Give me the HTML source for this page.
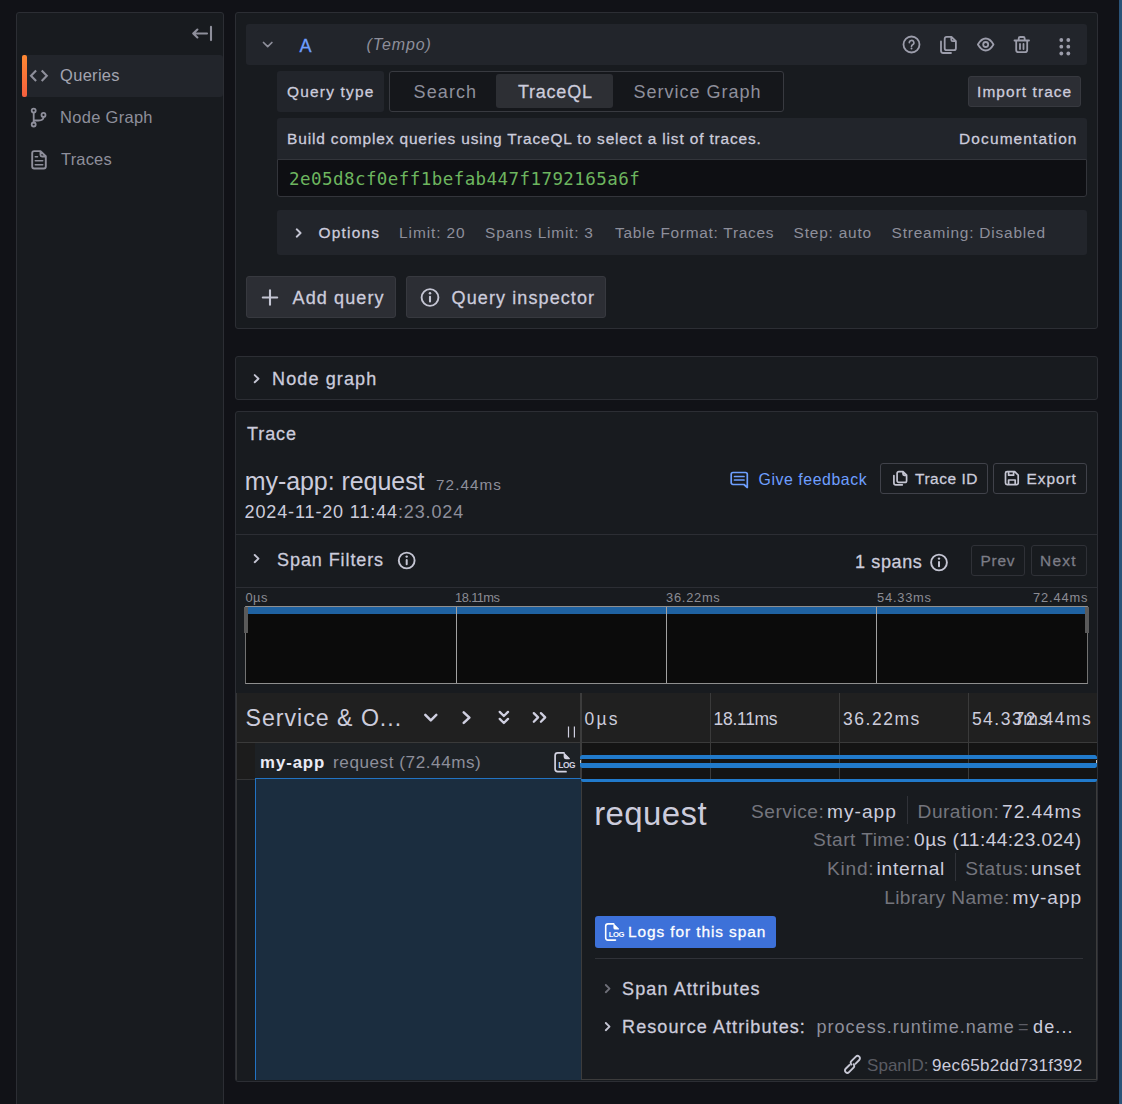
<!DOCTYPE html>
<html lang="en">
<head>
<meta charset="utf-8">
<title>Explore - Tempo - Grafana</title>
<style>
*{box-sizing:border-box;margin:0;padding:0}
html,body{width:1122px;height:1104px;overflow:hidden;background:#111217;}
body{font-family:"Liberation Sans",sans-serif;color:#ccccdc;font-size:17.5px;position:relative;}
.a{position:absolute}
.t{position:absolute;white-space:nowrap;line-height:1;}
.panel{position:absolute;background:#181b1f;border:1px solid #2c2e34;border-radius:3px;}
.box{position:absolute;background:#22252b;border-radius:3px;}
.btn{position:absolute;background:#2c2e34;border:1px solid #37393f;border-radius:3px;}
.obtn{position:absolute;border:1px solid #40424a;border-radius:3px;}
svg{position:absolute;overflow:visible}
.i{fill:none;stroke:#c4c5d3;stroke-width:1.9;stroke-linecap:round;stroke-linejoin:round}
.is{fill:none;stroke:#8e8f9b;stroke-width:1.7;stroke-linecap:round;stroke-linejoin:round}
.vl{position:absolute;width:1px;background:#3a3a3a}

</style>
</head>
<body>
<!-- right blue edge -->
<div class="a" style="left:1119px;top:0;width:3px;height:1104px;background:#2a5378"></div>

<!-- SIDEBAR -->
<div class="panel" style="left:16px;top:12px;width:208px;height:1110px;"></div>
<div class="a" style="left:22px;top:55px;width:201px;height:42px;background:#22252b;border-radius:3px"></div>
<div class="a" style="left:22px;top:55px;width:5px;height:42px;border-radius:2px;background:linear-gradient(180deg,#ff8833,#f55f3e)"></div>
<svg class="is" style="left:0;top:0" width="240" height="200" viewBox="0 0 240 200">
  <!-- collapse -->
  <path d="M207 33.500H193.200M197.400 29.500l-4.200 4 4.200 4M211 26.900v13.200" stroke-width="2.100"/>
  <!-- brackets -->
  <path d="M36.100 70.500l-5.100 5.300 5.100 5.300M41.700 70.500l5.100 5.300-5.100 5.300" stroke-width="2.100" stroke-linecap="butt" stroke-linejoin="miter"/>
  <!-- code branch -->
  <g stroke-width="1.800"><circle cx="33.700" cy="110.600" r="2"/><circle cx="33.700" cy="124.500" r="2"/><circle cx="43.500" cy="114.900" r="2"/>
  <path d="M33.700 112.700v9.700M43.500 117c0 2.700-2 3.500-5 3.500h-4.700"/></g>
  <!-- file -->
  <g stroke-width="1.900"><path d="M40.500 151.100h-6.300a2 2 0 0 0-2 2v13.400a2 2 0 0 0 2 2h9.600a2 2 0 0 0 2-2v-10.200z M40.500 151.300v3.700a1.500 1.500 0 0 0 1.500 1.500h3.600"/><path d="M35.300 160.800h7.400M35.300 164.700h7.400M35.300 156.800h2.200" stroke-width="1.600"/></g>
</svg>

<!-- QUERIES PANEL -->
<div class="panel" style="left:235px;top:12px;width:863px;height:317px;"></div>
<div class="box" style="left:246px;top:24px;width:841px;height:41px;"></div>
<svg class="i" style="left:0;top:0" width="1122" height="70" viewBox="0 0 1122 70">
  <path class="is" d="M263.500 42.500l4.200 4.200 4.200-4.200" stroke-width="1.900"/>
  <g stroke="#9c9dab" stroke-width="1.800">
  <!-- help -->
  <circle cx="911.500" cy="44.500" r="8"/>
  <path d="M909.300 42.700a2.300 2.300 0 1 1 3.300 2.100c-.800.400-1.100.900-1.100 1.600" stroke-width="1.600"/><circle cx="911.500" cy="48.600" r="1" fill="#9c9dab" stroke="none"/>
  <!-- copy -->
  <path d="M946.700 36.800h4.800l4.400 4.400v7a2 2 0 0 1-2 2h-7.200a2 2 0 0 1-2-2v-9.400a2 2 0 0 1 2-2zM951.300 37v2.700a1.500 1.500 0 0 0 1.500 1.500h2.900M941 41.500v9.300a2.200 2.200 0 0 0 2.200 2.200h7.800"/>
  <!-- eye -->
  <path d="M977.900 44.500c2.300-4 4.900-6 7.800-6s5.500 2 7.800 6c-2.300 4-4.900 6-7.800 6s-5.500-2-7.800-6z"/><circle cx="985.700" cy="44.500" r="2.500"/>
  <!-- trash -->
  <path d="M1014.500 40.500h14.500M1016.200 40.500v9.500a2.200 2.200 0 0 0 2.200 2.200h6.600a2.200 2.200 0 0 0 2.200-2.200v-9.500M1018.700 40.300v-1.800a1.500 1.500 0 0 1 1.500-1.500h3a1.500 1.500 0 0 1 1.500 1.500v1.800M1020 44v5M1023.500 44v5"/>
  </g>
  <!-- drag -->
  <g fill="#9c9dab" stroke="none"><circle cx="1061.300" cy="40" r="1.900"/><circle cx="1068.300" cy="40" r="1.900"/><circle cx="1061.300" cy="46.700" r="1.900"/><circle cx="1068.300" cy="46.700" r="1.900"/><circle cx="1061.300" cy="53.500" r="1.900"/><circle cx="1068.300" cy="53.500" r="1.900"/></g>
</svg>

<!-- row 2 -->
<div class="box" style="left:277px;top:71px;width:107px;height:41px;"></div>
<div class="a" style="left:389px;top:71px;width:395px;height:41px;border:1px solid #383a40;border-radius:3px;background:#15171b"></div>
<div class="a" style="left:496px;top:74px;width:117px;height:34px;border-radius:3px;background:#2d2f34"></div>
<div class="btn" style="left:968px;top:76px;width:113px;height:31px;"></div>
<!-- row 3 -->
<div class="box" style="left:277px;top:118px;width:810px;height:41px;border-radius:3px 3px 0 0"></div>
<div class="a" style="left:277px;top:159px;width:810px;height:38px;background:#0e0f13;border:1px solid #33353b;border-radius:0 0 3px 3px"></div>
<!-- options -->
<div class="box" style="left:277px;top:210px;width:810px;height:45px;"></div>
<svg class="i" style="left:0;top:200px" width="700" height="130" viewBox="0 200 700 130">
  <path d="M296.700 229.300l3.900 3.700-3.900 3.700"/>
</svg>
<div class="btn" style="left:246px;top:276px;width:150px;height:42px;"></div>
<div class="btn" style="left:406px;top:276px;width:200px;height:42px;"></div>
<svg class="i" style="left:0;top:200px" width="700" height="130" viewBox="0 200 700 130">
  <path d="M262.800 297.500h14.400M270 290.300v14.400" stroke-width="2.100"/>
  <circle cx="430" cy="297.500" r="8.400"/><path d="M430 296.800v4.700" stroke-width="2.100"/><circle cx="430" cy="293.300" r="1.250" fill="#c4c5d3" stroke="none"/>
</svg>

<!-- NODE GRAPH PANEL -->
<div class="panel" style="left:235px;top:356px;width:863px;height:44px;"></div>
<svg class="i" style="left:0;top:350px" width="300" height="60" viewBox="0 350 300 60"><path d="M254.700 375.100l3.800 3.600-3.800 3.600"/></svg>

<!-- TRACE PANEL -->
<div class="panel" style="left:235px;top:411px;width:863px;height:671px;"></div>
<!-- header buttons -->
<svg style="left:0;top:460px" width="1122" height="40" viewBox="0 460 1122 40" fill="none" stroke-linecap="round" stroke-linejoin="round">
  <path stroke="#6e9fff" stroke-width="1.700" d="M733 472.500h12.500a1.800 1.800 0 0 1 1.800 1.800v13.200l-3.300-3h-11a1.800 1.800 0 0 1-1.800-1.800v-8.400a1.800 1.800 0 0 1 1.800-1.800zM734.500 476.500h9.500M734.500 480h9.500"/>
</svg>
<div class="obtn" style="left:880px;top:463px;width:108px;height:31px;"></div>
<div class="obtn" style="left:993px;top:463px;width:94px;height:31px;"></div>
<svg style="left:0;top:460px;fill:none;stroke:#c4c5d2;stroke-width:1.700;stroke-linecap:round;stroke-linejoin:round" width="1122" height="40" viewBox="0 460 1122 40">
  <path d="M898.800 471.600h4.200l3.600 3.600v5.500a1.700 1.700 0 0 1-1.700 1.700h-6.100a1.700 1.700 0 0 1-1.700-1.700v-7.400a1.700 1.700 0 0 1 1.700-1.700zM903 471.800v2.200a1.300 1.300 0 0 0 1.300 1.300h2.200M893.900 475.600v7.300a1.900 1.900 0 0 0 1.900 1.900h6.500"/>
  <path d="M1007.100 471.600h7.600l3.500 3.500v8a1.600 1.600 0 0 1-1.600 1.600h-9.500a1.600 1.600 0 0 1-1.600-1.600v-9.900a1.600 1.600 0 0 1 1.600-1.600zM1008.600 471.900v3.300h5v-3.300M1008.600 484.500v-4.500h6.600v4.500"/>
</svg>
<div class="a" style="left:236px;top:534px;width:861px;height:1px;background:#2c2e34"></div>
<div class="a" style="left:236px;top:587px;width:861px;height:1px;background:#2c2e34"></div>
<svg class="i" style="left:0;top:540px" width="1122" height="40" viewBox="0 540 1122 40">
  <path d="M254.700 555l3.800 3.600-3.800 3.600"/>
  <circle cx="406.700" cy="560.500" r="7.900"/><path d="M406.700 559.900v4.300" stroke-width="2"/><circle cx="406.700" cy="556.600" r="1.200" fill="#c4c5d3" stroke="none"/>
  <circle cx="939" cy="562.500" r="7.900"/><path d="M939 561.900v4.300" stroke-width="2"/><circle cx="939" cy="558.600" r="1.200" fill="#c4c5d3" stroke="none"/>
</svg>
<div class="obtn" style="left:971px;top:545px;width:54px;height:31px;border-color:#2f3137"></div>
<div class="obtn" style="left:1031px;top:545px;width:56px;height:31px;border-color:#2f3137"></div>

<!-- minimap -->
<div class="a" style="left:245px;top:605.500px;width:843px;height:78.500px;background:#0b0b0b;border:1px solid #8f8f8f;border-left:1.700px solid #727272;border-right:1.700px solid #727272"></div>
<div class="a" style="left:246px;top:606.500px;width:841px;height:7.300px;background:#1f62a1"></div>
<div class="a" style="left:456.200px;top:606.500px;width:1.300px;height:76.500px;background:#a2a2a2"></div>
<div class="a" style="left:666px;top:606.500px;width:1.300px;height:76.500px;background:#a2a2a2"></div>
<div class="a" style="left:876px;top:606.500px;width:1.300px;height:76.500px;background:#a2a2a2"></div>
<div class="a" style="left:244px;top:606.500px;width:4px;height:26.500px;background:#5a5a5a"></div>
<div class="a" style="left:1085px;top:606.500px;width:4px;height:26.500px;background:#5a5a5a"></div>

<!-- timeline header -->
<div class="a" style="left:236px;top:693px;width:861px;height:50px;background:#202020;border-bottom:1px solid #3a3a3a"></div>
<svg style="left:0;top:700px;fill:none;stroke:#cfcfe0;stroke-width:2.500;stroke-linecap:round;stroke-linejoin:round" width="600" height="45" viewBox="0 700 600 45">
  <path d="M425.300 714.900l5.500 5.500 5.500-5.500"/>
  <path d="M463.700 712.300l5.700 5.300-5.700 5.300"/>
  <path d="M499.700 711.900l4.150 4.100 4.150-4.100M499.700 718.900l4.150 4.100 4.150-4.100" stroke-width="2.300"/>
  <path d="M533.800 713.100l4.300 4.300-4.300 4.300M540.900 713.100l4.300 4.300-4.300 4.300" stroke-width="2.300"/>
  <path d="M568.500 726.500v11M574.400 726.500v11" stroke-width="1.200" stroke-linecap="butt"/>
</svg>
<!-- timeline row -->
<div class="a" style="left:236px;top:743px;width:19px;height:36px;background:#1c1c1c"></div>
<div class="a" style="left:236px;top:779px;width:19px;height:1px;background:#333436"></div>
<div class="a" style="left:255px;top:743px;width:326px;height:36px;background:#1d2125"></div>
<div class="a" style="left:236px;top:693px;width:1px;height:387px;background:#343537"></div>
<div class="a" style="left:581px;top:743px;width:516px;height:36px;background:#141414"></div>
<!-- ticks -->
<div class="vl" style="left:580.300px;top:693px;height:86px;width:1.500px;background:#3c3c3c"></div>
<div class="vl" style="left:710px;top:693px;height:86px"></div>
<div class="vl" style="left:839px;top:693px;height:86px"></div>
<div class="vl" style="left:968px;top:693px;height:86px"></div>
<!-- span bar -->
<div class="a" style="left:580px;top:755px;width:517px;height:4.200px;border-radius:2.500px 2.500px 0 0;background:#217acb"></div>
<div class="a" style="left:580px;top:763px;width:517px;height:5.200px;border-radius:0 0 2.500px 2.500px;background:#217acb"></div>
<div class="a" style="left:580px;top:759.500px;width:1px;height:3.500px;background:#c8c8c8"></div>
<div class="a" style="left:1096px;top:759.500px;width:1px;height:3.500px;background:#c8c8c8"></div>
<!-- detail -->
<div class="a" style="left:255px;top:778px;width:326px;height:302px;background:#1b2d3f;border-left:1.300px solid #2273c3;border-top:1.200px solid #2273c3"></div>
<div class="a" style="left:581px;top:779px;width:516px;height:301px;background:#181b1f;border:1px solid #3c3c3c;border-top:0"></div>
<div class="a" style="left:580.500px;top:779px;width:516.500px;height:3px;background:#217acb;border-radius:0 0 2px 2px"></div>
<div class="a" style="left:907px;top:796px;width:1px;height:28px;background:#303238"></div>
<div class="a" style="left:955px;top:853px;width:1px;height:28px;background:#303238"></div>
<div class="a" style="left:595px;top:916px;width:181px;height:32px;background:#3d71d9;border-radius:3px"></div>
<div class="a" style="left:595px;top:958px;width:488px;height:1px;background:#303238"></div>
<svg class="i" style="left:0;top:740px" width="1122" height="350" viewBox="0 740 1122 350">
  <!-- log icon row -->
  <g stroke="#d3d3e2" stroke-width="1.700">
  <path d="M566 771.700h-8.300a2.600 2.600 0 0 1-2.600-2.600v-13.700a2.600 2.600 0 0 1 2.600-2.600h6.300"/>
  <path d="M564.300 753.600l5 5h-3.500a1.500 1.500 0 0 1-1.500-1.500z" fill="#d3d3e2" stroke-width="1.300"/>
  </g>
  <!-- log icon button -->
  <g stroke="#ffffff" stroke-width="1.600">
  <path d="M615.500 940.100h-7.500a2.300 2.300 0 0 1-2.300-2.300v-11.600a2.300 2.300 0 0 1 2.300-2.300h5.700"/>
  <path d="M614 924.600l4.400 4.400h-3.100a1.300 1.300 0 0 1-1.300-1.300z" fill="#ffffff" stroke-width="1.200"/>
  </g>
  <path d="M605.800 985l3.700 3.600-3.700 3.600" stroke="#6e6f78"/>
  <path d="M605.800 1023l3.700 3.600-3.700 3.600"/>
  <!-- link -->
  <g stroke-width="1.900" stroke="#c6c7d4" transform="translate(852.450 1064.400) rotate(-45)">
    <path d="M2.500 1.700H7.900A2.400 2.400 0 0 0 7.900-3.100H1.500A2.400 2.400 0 0 0-.900-.700"/>
    <path d="M-2.500-1.700H-7.900A2.400 2.400 0 0 0-7.900 3.100H-1.500A2.400 2.400 0 0 0 .900.700"/>
  </g>
</svg>
<div class="t" style="left:558.300px;top:761.200px;font-size:8.400px;font-weight:700;color:#d3d3e2;letter-spacing:-.45px">LOG</div>
<div class="t" style="left:608.800px;top:930.800px;font-size:7.700px;font-weight:700;color:#fff;letter-spacing:-.45px">LOG</div>

<!-- TEXT -->
<div class="t" id="s1" style="left:60.10px;top:67.05px;font-size:16.48px;font-weight:400;color:#a3a4b0;letter-spacing:0.300px;">Queries</div>
<div class="t" id="s2" style="left:60.10px;top:109.05px;font-size:16.48px;font-weight:400;color:#8e8f9b;letter-spacing:0.300px;">Node Graph</div>
<div class="t" id="s3" style="left:61.00px;top:151.05px;font-size:16.48px;font-weight:400;color:#8e8f9b;letter-spacing:0.180px;">Traces</div>
<div class="t" id="qa" style="left:299.50px;top:36.74px;font-size:18.03px;font-weight:400;color:#6e9fff;letter-spacing:-1.080px;-webkit-text-stroke:0.28px currentColor;">A</div>
<div class="t" id="qt" style="left:366.60px;top:36.99px;font-size:15.96px;font-weight:400;color:#8e8f9b;letter-spacing:0.900px;font-style:italic;">(Tempo)</div>
<div class="t" id="r2a" style="left:287.10px;top:83.62px;font-size:15.45px;font-weight:400;color:#ccccdc;letter-spacing:1.200px;-webkit-text-stroke:0.28px currentColor;">Query type</div>
<div class="t" id="r2b" style="left:413.60px;top:82.74px;font-size:18.03px;font-weight:400;color:#8e8f9b;letter-spacing:1.080px;">Search</div>
<div class="t" id="r2c" style="left:518.00px;top:82.74px;font-size:18.03px;font-weight:400;color:#ccccdc;letter-spacing:0.750px;-webkit-text-stroke:0.28px currentColor;">TraceQL</div>
<div class="t" id="r2d" style="left:633.60px;top:82.74px;font-size:18.03px;font-weight:400;color:#8e8f9b;letter-spacing:0.975px;">Service Graph</div>
<div class="t" id="r2e" style="left:977.10px;top:83.92px;font-size:15.45px;font-weight:400;color:#ccccdc;letter-spacing:1.064px;-webkit-text-stroke:0.28px currentColor;">Import trace</div>
<div class="t" id="r3a" style="left:287.10px;top:131.42px;font-size:15.45px;font-weight:400;color:#ccccdc;letter-spacing:0.856px;-webkit-text-stroke:0.28px currentColor;">Build complex queries using TraceQL to select a list of traces.</div>
<div class="t" id="r3b" style="left:959.10px;top:131.42px;font-size:15.45px;font-weight:400;color:#ccccdc;letter-spacing:1.125px;-webkit-text-stroke:0.28px currentColor;">Documentation</div>
<div class="t" id="code" style="left:289.10px;top:171.19px;font-size:17.5px;font-weight:400;color:#6db55f;letter-spacing:0.435px;font-family:'DejaVu Sans Mono','Liberation Mono',monospace;">2e05d8cf0eff1befab447f1792165a6f</div>
<div class="t" id="o1" style="left:318.60px;top:224.92px;font-size:15.45px;font-weight:400;color:#ccccdc;letter-spacing:1.200px;-webkit-text-stroke:0.28px currentColor;">Options</div>
<div class="t" id="o2" style="left:399.10px;top:224.92px;font-size:15.45px;font-weight:400;color:#8e8f9b;letter-spacing:0.900px;">Limit: 20</div>
<div class="t" id="o3" style="left:485.10px;top:224.92px;font-size:15.45px;font-weight:400;color:#8e8f9b;letter-spacing:0.762px;">Spans Limit: 3</div>
<div class="t" id="o4" style="left:615.00px;top:224.92px;font-size:15.45px;font-weight:400;color:#8e8f9b;letter-spacing:0.711px;">Table Format: Traces</div>
<div class="t" id="o5" style="left:793.60px;top:224.92px;font-size:15.45px;font-weight:400;color:#8e8f9b;letter-spacing:0.800px;">Step: auto</div>
<div class="t" id="o6" style="left:891.60px;top:224.92px;font-size:15.45px;font-weight:400;color:#8e8f9b;letter-spacing:0.800px;">Streaming: Disabled</div>
<div class="t" id="b1" style="left:292.50px;top:289.44px;font-size:18.03px;font-weight:400;color:#ccccdc;letter-spacing:1.125px;-webkit-text-stroke:0.28px currentColor;">Add query</div>
<div class="t" id="b2" style="left:451.60px;top:289.44px;font-size:18.03px;font-weight:400;color:#ccccdc;letter-spacing:1.093px;-webkit-text-stroke:0.28px currentColor;">Query inspector</div>
<div class="t" id="ng" style="left:272.10px;top:369.74px;font-size:18.03px;font-weight:400;color:#ccccdc;letter-spacing:1.100px;-webkit-text-stroke:0.28px currentColor;">Node graph</div>
<div class="t" id="tr" style="left:247.00px;top:424.74px;font-size:18.03px;font-weight:400;color:#ccccdc;letter-spacing:0.900px;-webkit-text-stroke:0.28px currentColor;">Trace</div>
<div class="t" id="tt" style="left:244.70px;top:468.81px;font-size:25.03px;font-weight:400;color:#ccccdc;letter-spacing:-0.064px;">my-app: request</div>
<div class="t" id="td" style="left:436.10px;top:477.10px;font-size:15.24px;font-weight:400;color:#8e8f9b;letter-spacing:1.050px;">72.44ms</div>
<div class="t" id="ts" style="left:244.60px;top:502.74px;font-size:18.03px;font-weight:400;color:#ccccdc;letter-spacing:0.859px;">2024-11-20 11:44<span style="color:#8e8f9b">:23.024</span></div>
<div class="t" id="gf" style="left:758.54px;top:471.57px;font-size:15.86px;font-weight:400;color:#6e9fff;letter-spacing:0.555px;">Give feedback</div>
<div class="t" id="tid" style="left:915.02px;top:470.92px;font-size:15.45px;font-weight:400;color:#ccccdc;letter-spacing:0.540px;-webkit-text-stroke:0.28px currentColor;">Trace ID</div>
<div class="t" id="exp" style="left:1026.60px;top:470.92px;font-size:15.45px;font-weight:400;color:#ccccdc;letter-spacing:0.900px;-webkit-text-stroke:0.28px currentColor;">Export</div>
<div class="t" id="sf" style="left:277.10px;top:550.74px;font-size:18.03px;font-weight:400;color:#ccccdc;letter-spacing:0.900px;-webkit-text-stroke:0.28px currentColor;">Span Filters</div>
<div class="t" id="sp" style="left:855.10px;top:552.74px;font-size:18.03px;font-weight:400;color:#ccccdc;letter-spacing:0.600px;-webkit-text-stroke:0.28px currentColor;">1 spans</div>
<div class="t" id="prev" style="left:980.58px;top:552.92px;font-size:15.45px;font-weight:400;color:#7c7d87;letter-spacing:0.720px;-webkit-text-stroke:0.28px currentColor;">Prev</div>
<div class="t" id="next" style="left:1040.10px;top:552.92px;font-size:15.45px;font-weight:400;color:#7c7d87;letter-spacing:1.200px;-webkit-text-stroke:0.28px currentColor;">Next</div>
<div class="t" id="m0" style="left:245.50px;top:591.60px;font-size:12.88px;font-weight:400;color:#8b8c94;letter-spacing:0.450px;">0µs</div>
<div class="t" id="m1" style="left:455.10px;top:591.60px;font-size:12.88px;font-weight:400;color:#8b8c94;letter-spacing:-0.600px;">18.11ms</div>
<div class="t" id="m2" style="left:666.10px;top:591.60px;font-size:12.88px;font-weight:400;color:#8b8c94;letter-spacing:0.720px;">36.22ms</div>
<div class="t" id="m3" style="left:877.10px;top:591.60px;font-size:12.88px;font-weight:400;color:#8b8c94;letter-spacing:0.750px;">54.33ms</div>
<div class="t" id="m4" style="left:1033.06px;top:591.60px;font-size:12.88px;font-weight:400;color:#8b8c94;letter-spacing:0.840px;">72.44ms</div>
<div class="t" id="h0" style="left:245.60px;top:706.88px;font-size:23.18px;font-weight:400;color:#ccccdc;letter-spacing:0.969px;">Service &amp; O...</div>
<div class="t" id="h1" style="left:584.60px;top:710.98px;font-size:17.51px;font-weight:400;color:#ccccdc;letter-spacing:2.160px;">0µs</div>
<div class="t" id="h2" style="left:713.60px;top:710.98px;font-size:17.51px;font-weight:400;color:#ccccdc;letter-spacing:-0.300px;">18.11ms</div>
<div class="t" id="h3" style="left:843.10px;top:710.98px;font-size:17.51px;font-weight:400;color:#ccccdc;letter-spacing:1.500px;">36.22ms</div>
<div class="t" id="h4" style="left:971.90px;top:710.98px;font-size:17.51px;font-weight:400;color:#ccccdc;letter-spacing:1.500px;">54.33ms</div>
<div class="t" id="h5" style="left:1014.60px;top:710.98px;font-size:17.51px;font-weight:400;color:#ccccdc;letter-spacing:1.500px;">72.44ms</div>
<div class="t" id="rw1" style="left:260.10px;top:754.79px;font-size:16.79px;font-weight:700;color:#ebebf5;letter-spacing:0.900px;">my-app</div>
<div class="t" id="rw2" style="left:333.10px;top:753.52px;font-size:17.1px;font-weight:400;color:#8e8f9b;letter-spacing:0.562px;">request (72.44ms)</div>
<div class="t" id="d0" style="left:594.20px;top:798.10px;font-size:32.96px;font-weight:400;color:#ccccdc;letter-spacing:0.420px;">request</div>
<div class="t" id="d1a" style="left:751.10px;top:802.28px;font-size:19.16px;font-weight:400;color:#74757d;letter-spacing:0.489px;">Service:</div>
<div class="t" id="d1b" style="left:827.10px;top:802.28px;font-size:19.16px;font-weight:400;color:#ccccdc;letter-spacing:0.972px;">my-app</div>
<div class="t" id="d1c" style="left:917.62px;top:802.28px;font-size:19.16px;font-weight:400;color:#74757d;letter-spacing:0.450px;">Duration:</div>
<div class="t" id="d1d" style="left:1002.10px;top:802.28px;font-size:19.16px;font-weight:400;color:#ccccdc;letter-spacing:0.900px;">72.44ms</div>
<div class="t" id="d2a" style="left:813.10px;top:830.48px;font-size:19.16px;font-weight:400;color:#74757d;letter-spacing:0.450px;">Start Time:</div>
<div class="t" id="d2b" style="left:914.10px;top:830.48px;font-size:19.16px;font-weight:400;color:#ccccdc;letter-spacing:0.424px;">0µs (11:44:23.024)</div>
<div class="t" id="d3a" style="left:827.10px;top:859.38px;font-size:19.16px;font-weight:400;color:#74757d;letter-spacing:0.720px;">Kind:</div>
<div class="t" id="d3b" style="left:876.60px;top:859.38px;font-size:19.16px;font-weight:400;color:#ccccdc;letter-spacing:0.694px;">internal</div>
<div class="t" id="d3c" style="left:965.14px;top:859.38px;font-size:19.16px;font-weight:400;color:#74757d;letter-spacing:0.630px;">Status:</div>
<div class="t" id="d3d" style="left:1031.10px;top:859.38px;font-size:19.16px;font-weight:400;color:#ccccdc;letter-spacing:0.675px;">unset</div>
<div class="t" id="d4a" style="left:884.14px;top:887.78px;font-size:19.16px;font-weight:400;color:#74757d;letter-spacing:0.405px;">Library Name:</div>
<div class="t" id="d4b" style="left:1012.62px;top:887.78px;font-size:19.16px;font-weight:400;color:#ccccdc;letter-spacing:0.936px;">my-app</div>
<div class="t" id="lg" style="left:628.10px;top:923.92px;font-size:15.45px;font-weight:400;color:#ffffff;letter-spacing:0.900px;-webkit-text-stroke:0.28px currentColor;">Logs for this span</div>
<div class="t" id="a1" style="left:622.10px;top:979.74px;font-size:18.03px;font-weight:400;color:#ccccdc;letter-spacing:1.093px;-webkit-text-stroke:0.28px currentColor;">Span Attributes</div>
<div class="t" id="a2" style="left:622.10px;top:1017.74px;font-size:18.03px;font-weight:400;color:#ccccdc;letter-spacing:1.080px;-webkit-text-stroke:0.28px currentColor;">Resource Attributes:</div>
<div class="t" id="a3" style="left:816.60px;top:1017.74px;font-size:18.03px;font-weight:400;color:#8e8f9b;letter-spacing:0.995px;">process.runtime.name</div>
<div class="t" id="a4" style="left:1018.10px;top:1017.74px;font-size:18.03px;font-weight:400;color:#5c5d65;letter-spacing:0.000px;">=</div>
<div class="t" id="a5" style="left:1033.10px;top:1017.74px;font-size:18.03px;font-weight:400;color:#ccccdc;letter-spacing:1.080px;">de...</div>
<div class="t" id="si" style="left:867.10px;top:1056.61px;font-size:17.0px;font-weight:400;color:#5a5b63;letter-spacing:0.000px;">SpanID:</div>
<div class="t" id="sv" style="left:932.10px;top:1056.61px;font-size:17.0px;font-weight:400;color:#ccccdc;letter-spacing:0.300px;">9ec65b2dd731f392</div>
</body>
</html>
